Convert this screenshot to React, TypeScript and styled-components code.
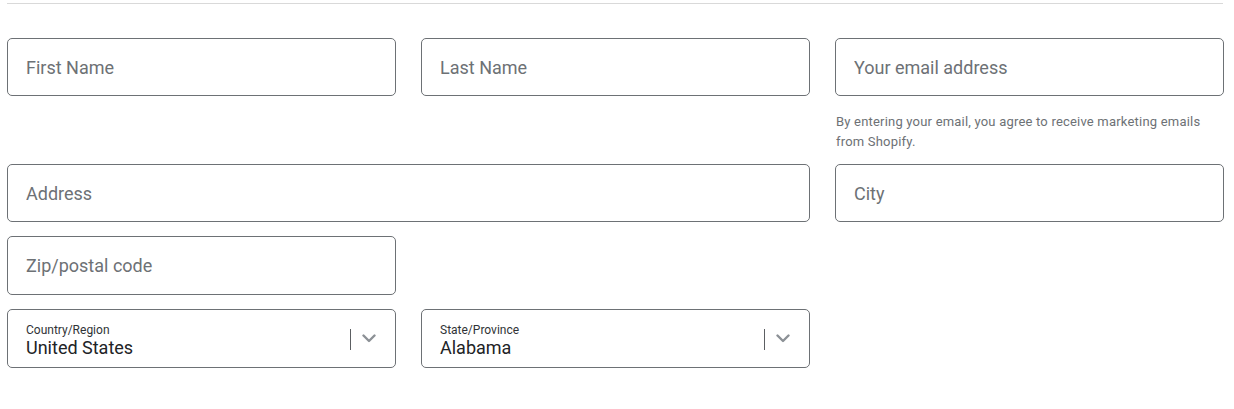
import styled, { createGlobalStyle } from 'styled-components';

const GlobalStyle = createGlobalStyle`
  body {
    margin: 0;
    background: #ffffff;
    font-family: Roboto, "Liberation Sans", Arial, sans-serif;
  }
`;

const Page = styled.div`
  width: 1217px;
  padding: 3px 0 0 7px;
`;

const Rule = styled.hr`
  margin: 0 0 34px;
  border: 0;
  border-top: 1px solid #d9d9d9;
  width: 1216px;
`;

const Form = styled.form`
  display: grid;
  grid-template-columns: repeat(3, 389px);
  column-gap: 25px;
  row-gap: 14px;
  align-items: start;
`;

const Field = styled.div<{ $span?: number; $newRow?: boolean }>`
  grid-column: ${(p) => (p.$newRow ? '1 / ' : '')}span ${(p) => p.$span ?? 1};
  display: flex;
  flex-direction: column;
`;

const Input = styled.input<{ $tall?: boolean }>`
  box-sizing: border-box;
  height: ${(p) => (p.$tall ? 59 : 58)}px;
  width: 100%;
  padding: 0 18px;
  border: 1px solid #6d7175;
  border-radius: 5px;
  font-family: inherit;
  font-size: 18px;
  color: #212326;
  outline: none;

  &::placeholder {
    color: #6d7175;
  }
`;

const Helper = styled.p`
  margin: 16px 0 -2px 1px;
  font-size: 13px;
  line-height: 20px;
  color: #6d7175;
  letter-spacing: 0.2px;
`;

const SelectBox = styled.div`
  box-sizing: border-box;
  height: 59px;
  display: flex;
  align-items: center;
  padding: 0 18px;
  border: 1px solid #6d7175;
  border-radius: 5px;
`;

const SelectText = styled.div`
  flex: 1;
  display: flex;
  flex-direction: column;
  padding-top: 4px;
`;

const SelectLabel = styled.span`
  font-size: 12px;
  line-height: 14px;
  color: #303336;
`;

const SelectValue = styled.span`
  font-size: 18px;
  line-height: 22px;
  color: #212326;
`;

const Divider = styled.span`
  width: 1px;
  height: 21px;
  background: #5c5f62;
  margin-right: 11px;
  margin-top: 2px;
`;

const Chevron = styled.svg`
  width: 14px;
  height: 9px;
  margin-right: 1px;
`;

function Select({ label, value }: { label: string; value: string }) {
  return (
    <SelectBox>
      <SelectText>
        <SelectLabel>{label}</SelectLabel>
        <SelectValue>{value}</SelectValue>
      </SelectText>
      <Divider />
      <Chevron viewBox="0 0 14 9">
        <path d="M1.5 1.5l5.5 5.5 5.5-5.5" fill="none" stroke="#8c9196" strokeWidth="2.4" strokeLinecap="round" strokeLinejoin="round" />
      </Chevron>
    </SelectBox>
  );
}

export default function App() {
  return (
    <>
      <GlobalStyle />
      <Page>
        <Rule />
        <Form onSubmit={(e) => e.preventDefault()}>
          <Field>
            <Input placeholder="First Name" />
          </Field>
          <Field>
            <Input placeholder="Last Name" />
          </Field>
          <Field>
            <Input placeholder="Your email address" type="email" />
            <Helper>
              By entering your email, you agree to receive marketing emails
              <br />
              from Shopify.
            </Helper>
          </Field>
          <Field $span={2}>
            <Input placeholder="Address" />
          </Field>
          <Field>
            <Input placeholder="City" />
          </Field>
          <Field>
            <Input placeholder="Zip/postal code" $tall />
          </Field>
          <Field $newRow>
            <Select label="Country/Region" value="United States" />
          </Field>
          <Field>
            <Select label="State/Province" value="Alabama" />
          </Field>
        </Form>
      </Page>
    </>
  );
}
